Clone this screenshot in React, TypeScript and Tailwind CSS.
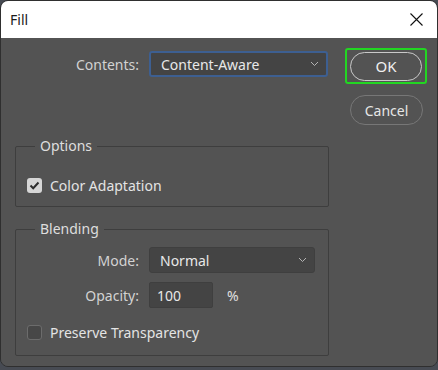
import type { ReactNode } from "react";

const font = { fontFamily: '"Noto Sans", "Open Sans", sans-serif' };

function Chevron() {
  return (
    <svg width="9" height="6" viewBox="0 0 9 6" className="shrink-0">
      <polyline points="1,1 4.5,4.5 8,1" fill="none" stroke="#b4b4b4" strokeWidth="1" />
    </svg>
  );
}

function Select({ value, width, focused }: { value: string; width: string; focused?: boolean }) {
  return (
    <div
      className={`flex h-[26px] items-center justify-between rounded-[3px] bg-[#444444] pl-[10px] pr-[7px] text-[14px] text-[#e8e8e8] ${width} ${
        focused ? "border-2 border-[#3d5f91]" : "border border-[#3f3f3f]"
      }`}
    >
      <span>{value}</span>
      <Chevron />
    </div>
  );
}

function Checkbox({ checked, label }: { checked?: boolean; label: string }) {
  return (
    <div className="flex h-[20px] items-center gap-[8px] pl-[11px]">
      {checked ? (
        <span className="flex h-[15px] w-[15px] items-center justify-center rounded-[3px] bg-[#d6d6d6]">
          <svg width="11" height="9" viewBox="0 0 11 9">
            <polyline points="1.5,4.5 4.2,7.2 9.5,1.5" fill="none" stroke="#2e2e2e" strokeWidth="2" />
          </svg>
        </span>
      ) : (
        <span className="h-[15px] w-[15px] rounded-[3px] border border-[#6c6c6c] bg-[#474747]" />
      )}
      <span className="text-[14px] text-[#e4e4e4]">{label}</span>
    </div>
  );
}

function Group({ title, children, className }: { title: string; children: ReactNode; className?: string }) {
  return (
    <fieldset className={`rounded-[2px] border border-[#3e3e3e] ${className ?? ""}`}>
      <legend className="ml-[19px] px-[5px] text-[14px] leading-[20px] text-[#dedede]">{title}</legend>
      {children}
    </fieldset>
  );
}

function Row({ label, children }: { label: string; children: ReactNode }) {
  return (
    <div className="flex items-center gap-[10px]">
      <span className="w-[123px] text-right text-[14px] text-[#d2d2d2]">{label}</span>
      {children}
    </div>
  );
}

export default function App() {
  return (
    <div className="h-[370px] w-[438px] overflow-hidden bg-[#474b53]" style={font}>
      <div className="flex h-[367px] w-[438px] flex-col overflow-hidden rounded-[8px] border border-[#2f2f2f]">
        <div className="flex h-[37px] shrink-0 items-center justify-between bg-white pl-[9px] pr-[14px]">
          <span className="text-[14px] text-[#1b1b1b]">Fill</span>
          <svg width="13" height="13" viewBox="0 0 13 13">
            <path d="M0.5 0.5 L12.5 12.5 M12.5 0.5 L0.5 12.5" stroke="#111" strokeWidth="1.1" />
          </svg>
        </div>

        <div className="flex flex-1 bg-[#535353]">
          <div className="ml-[14px] w-[314px]">
            <div className="mt-[13px] flex items-center gap-[10px]">
              <span className="w-[124px] text-right text-[14px] text-[#d2d2d2]">Contents:</span>
              <Select value="Content-Aware" width="w-[179px]" focused />
            </div>

            <Group title="Options" className="mt-[59px] pb-[11px] pt-[19px]">
              <Checkbox checked label="Color Adaptation" />
            </Group>

            <Group title="Blending" className="mt-[12px] pb-[13px] pt-[8px]">
              <div className="flex flex-col gap-[9px]">
                <Row label="Mode:">
                  <Select value="Normal" width="w-[166px]" />
                </Row>
                <Row label="Opacity:">
                  <div className="flex h-[26px] w-[64px] items-center rounded-[2px] border border-[#3f3f3f] bg-[#444444] pl-[7px] text-[14px] text-[#e8e8e8]">
                    100
                  </div>
                  <span className="ml-[4px] text-[14px] text-[#e0e0e0]">%</span>
                </Row>
              </div>
              <div className="mt-[14px]">
                <Checkbox label="Preserve Transparency" />
              </div>
            </Group>
          </div>

          <div className="ml-[16px] mt-[10px] flex flex-col items-start">
            <div className="flex h-[36px] w-[82px] items-center justify-center rounded-[3px] border-2 border-[#22d622]">
              <div className="flex h-[29px] w-[72px] items-center justify-center rounded-full border border-[#c9c9c9] text-[15px] text-[#f0f0f0]">
                OK
              </div>
            </div>
            <div className="ml-[5px] mt-[11px] flex h-[30px] w-[73px] items-center justify-center rounded-full border border-[#777777] text-[14px] text-[#e6e6e6]">
              Cancel
            </div>
          </div>
        </div>
      </div>
    </div>
  );
}
